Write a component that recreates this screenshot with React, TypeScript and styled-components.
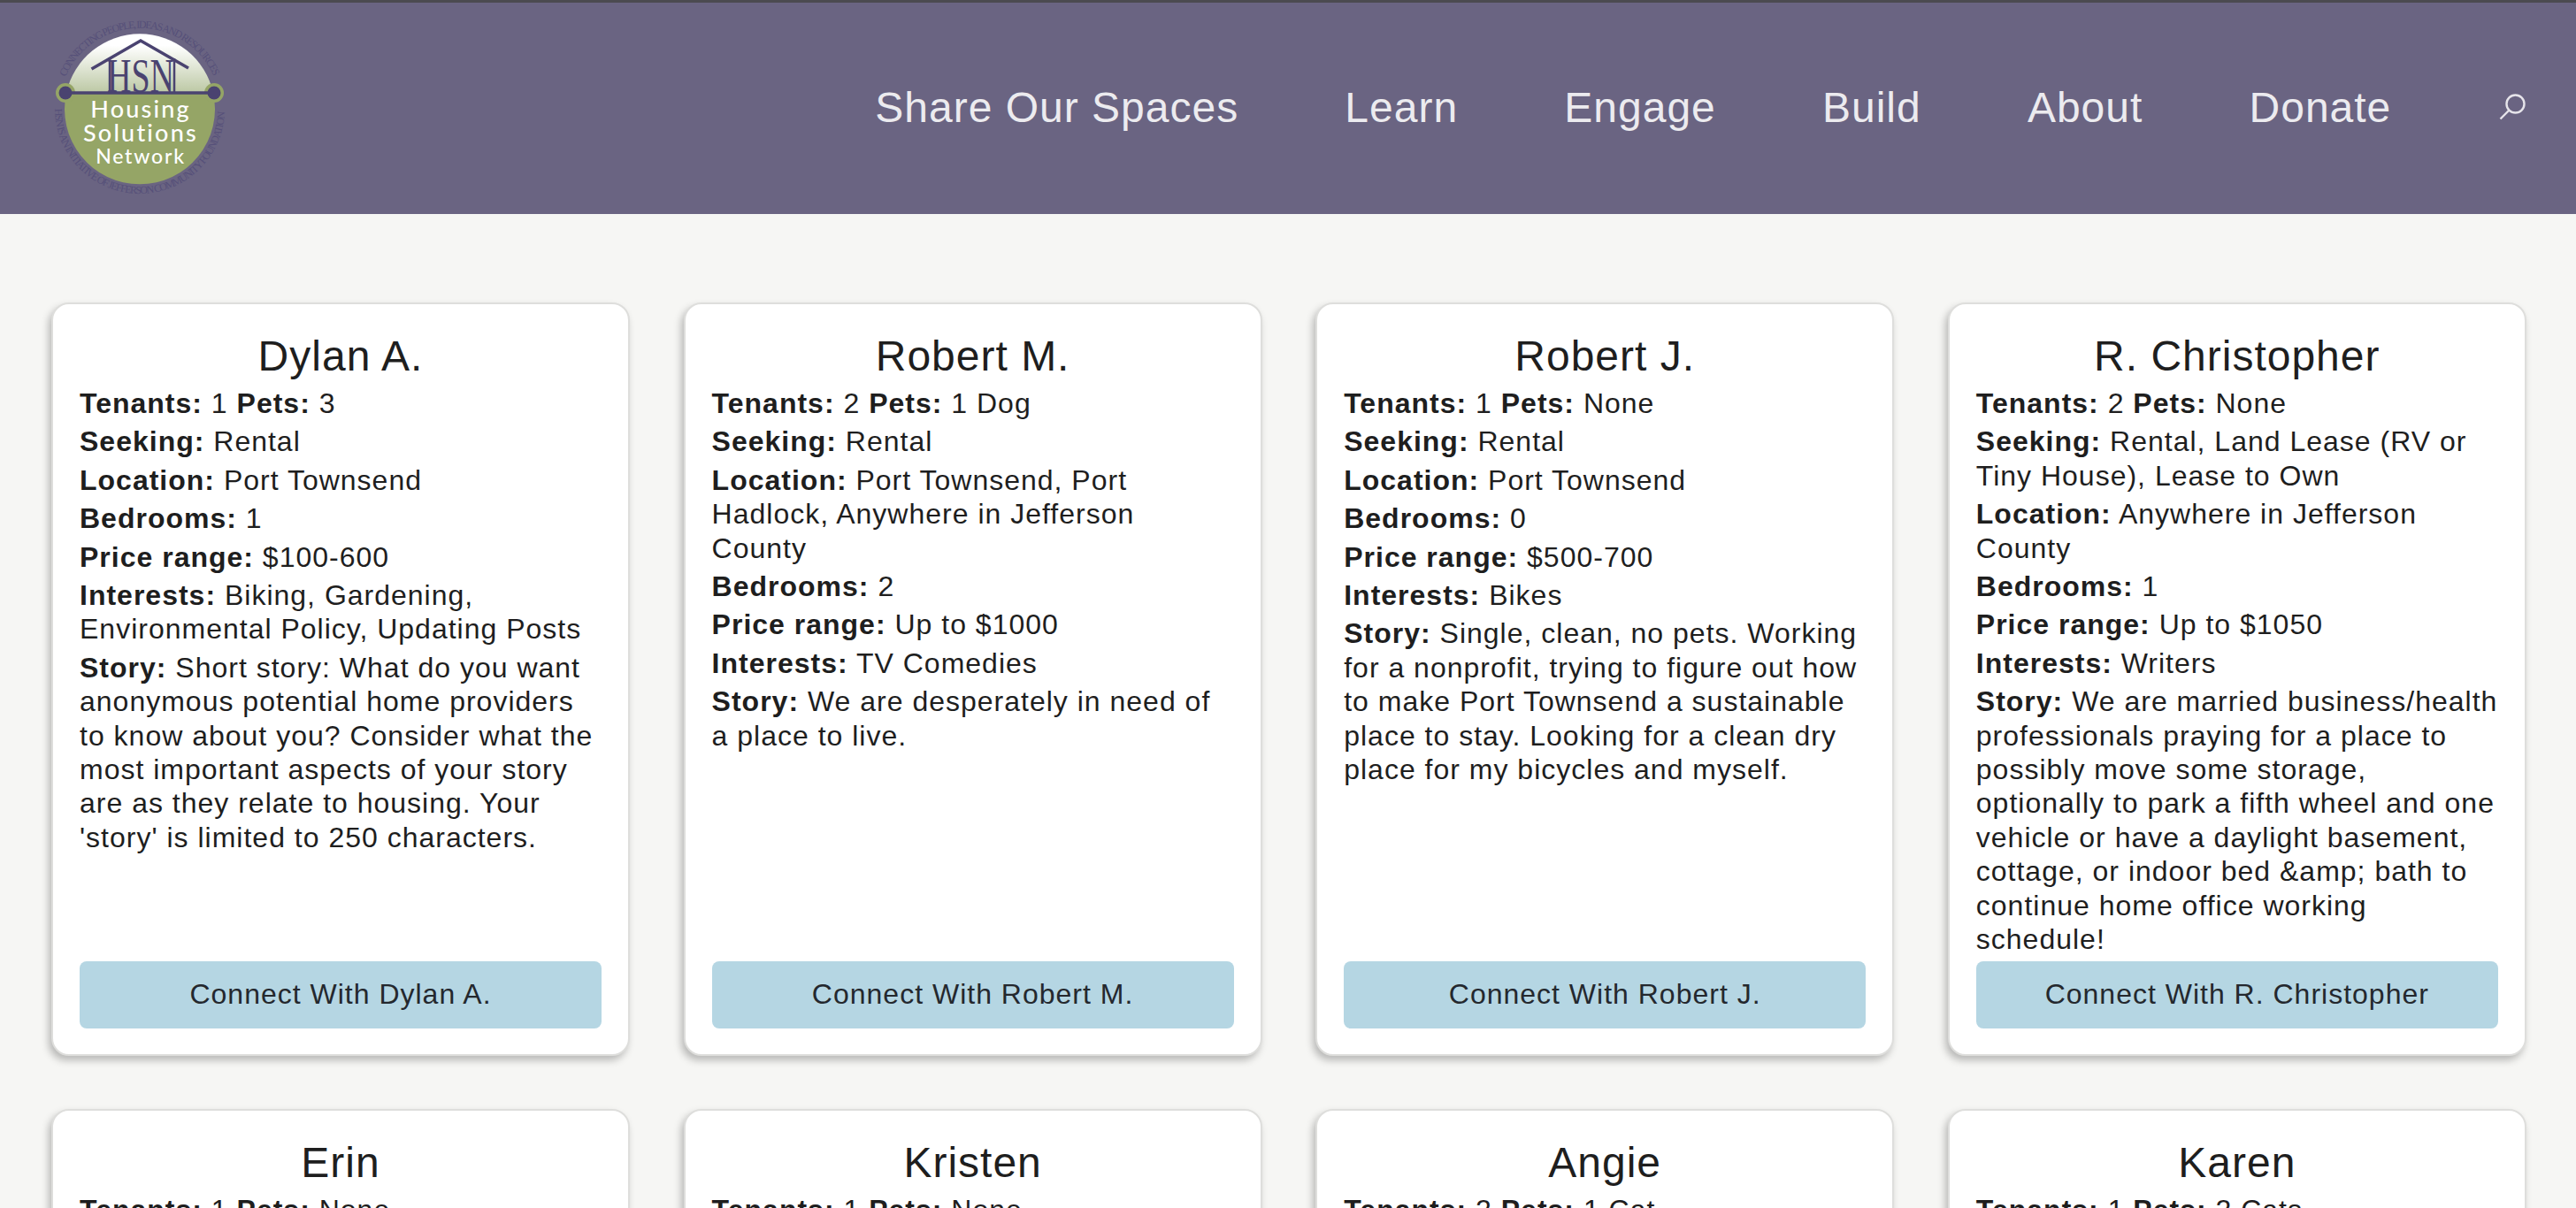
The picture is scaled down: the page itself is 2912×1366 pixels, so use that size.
import React from 'react';
import styled, { createGlobalStyle } from 'styled-components';

const Global = createGlobalStyle`
  html, body { margin: 0; padding: 0; background: #f6f6f4; height: 1366px; overflow: hidden; }
  * { box-sizing: border-box; }
  body { font-family: "Liberation Sans", Arial, sans-serif; color: #1e1e1e; }
`;

const Header = styled.header`
  height: 242px;
  border-top: 3px solid #4b4a50;
  background: #6a6482;
  display: flex;
  align-items: center;
  justify-content: space-between;
  padding: 0 57px 0 50px;
`;
const Nav = styled.nav`
  display: flex;
  align-items: center;
  gap: 120.2px;
`;
const NavLink = styled.a`
  font-size: 48px;
  line-height: 58px;
  letter-spacing: 1px;
  color: #ecebef;
  margin-top: -2px;
`;
const SearchButton = styled.span`
  display: flex;
  margin-left: 1.5px;
  margin-top: -4px;
`;
const Main = styled.main`
  display: grid;
  grid-template-columns: repeat(4, 654px);
  column-gap: 60.6px;
  row-gap: 60px;
  padding: 100px 0 0 58px;
`;
const Card = styled.article`
  display: flex;
  flex-direction: column;
  background: #fff;
  border: 2px solid #dededc;
  border-radius: 20px;
  box-shadow: -3px 5px 8px rgba(0, 0, 0, 0.25);
  padding: 30px 30px 29px;
`;
const Name = styled.h2`
  margin: 0 0 5px;
  font-size: 48px;
  line-height: 58px;
  font-weight: 400;
  letter-spacing: 1px;
  text-align: center;
  color: #1e1e1e;
`;
const Line = styled.p`
  margin: 0 0 5px;
  font-size: 32px;
  line-height: 38.4px;
  letter-spacing: 1px;
  color: #1e1e1e;
`;
const Connect = styled.a`
  margin-top: auto;
  height: 76px;
  display: flex;
  align-items: center;
  justify-content: center;
  background: #b5d6e3;
  border-radius: 8px;
  font-size: 32px;
  letter-spacing: 1px;
  color: #24282e;
`;

const Logo = () => (
  <svg width="210" height="205" viewBox="50 20 210 205" role="img" aria-label="Housing Solutions Network">
    <defs>
      <linearGradient id="dome" x1="0" y1="38" x2="0" y2="105" gradientUnits="userSpaceOnUse">
        <stop offset="0.2" stopColor="#ffffff" />
        <stop offset="1" stopColor="#bcc8a4" />
      </linearGradient>
      <path id="topArc" d="M 74 87 A 91.400 91.400 0 0 1 242 87" />
      <path id="botArc" d="M 62 123 A 96 96 0 0 0 254 123" />
    </defs>
    <text fill="#565079" fontFamily="Liberation Serif, serif" fontSize="12">
      <textPath href="#topArc" textLength="212" lengthAdjust="spacing">CONNECTING PEOPLE, IDEAS AND RESOURCES</textPath>
    </text>
    <text fill="#565079" fontFamily="Liberation Serif, serif" fontSize="12">
      <textPath href="#botArc" textLength="298" lengthAdjust="spacing">HSN IS AN INITIATIVE OF JEFFERSON COMMUNITY FOUNDATION</textPath>
    </text>
    <path d="M 75 105 A 85 85 0 0 1 241 105 Z" fill="url(#dome)" />
    <path d="M 75 105 A 85 85 0 1 0 241 105 Z" fill="#95a566" />
    <circle cx="74" cy="105" r="11" fill="#95a566" />
    <circle cx="242" cy="105" r="11" fill="#95a566" />
    <circle cx="74" cy="105" r="7.5" fill="#4a4370" />
    <circle cx="242" cy="105" r="7.5" fill="#4a4370" />
    <path d="M74 105H242" stroke="#4a4370" strokeWidth="3.5" />
    <path d="M103.500 78 L159 46 L213 77" fill="none" stroke="#4a4370" strokeWidth="3.5" />
    <path d="M124 65V105M197 66V105" fill="none" stroke="#4a4370" strokeWidth="2.5" />
    <text x="159" y="104" textAnchor="middle" fill="#4a4370" fontFamily="Liberation Serif, serif" fontSize="55" textLength="76" lengthAdjust="spacingAndGlyphs">HSN</text>
    <g fill="#ffffff" fontFamily="Lato, sans-serif" fontWeight="500" textAnchor="middle">
      <text x="159" y="132.500" fontSize="27" letterSpacing="2.2">Housing</text>
      <text x="159" y="159.500" fontSize="27" letterSpacing="2.2">Solutions</text>
      <text x="159" y="184.500" fontSize="23" letterSpacing="1.8">Network</text>
    </g>
  </svg>
);

const SearchIcon = () => (
  <svg width="30" height="30" viewBox="0 0 30 30" fill="none" stroke="#e6e4ea" strokeWidth="2.4">
    <circle cx="18.500" cy="11.500" r="10" />
    <path d="M11.500 18.500 L1.500 28.500" />
  </svg>
);

type Person = { name: string; tenants: string; pets: string; rows?: [string, string][] };

const people: Person[] = [
  { name: 'Dylan A.', tenants: '1', pets: '3', rows: [
    ['Seeking', 'Rental'], ['Location', 'Port Townsend'], ['Bedrooms', '1'], ['Price range', '$100-600'],
    ['Interests', 'Biking, Gardening, Environmental Policy, Updating Posts'],
    ['Story', "Short story: What do you want anonymous potential home providers to know about you? Consider what the most important aspects of your story are as they relate to housing. Your 'story' is limited to 250 characters."],
  ] },
  { name: 'Robert M.', tenants: '2', pets: '1 Dog', rows: [
    ['Seeking', 'Rental'], ['Location', 'Port Townsend, Port Hadlock, Anywhere in Jefferson County'], ['Bedrooms', '2'], ['Price range', 'Up to $1000'],
    ['Interests', 'TV Comedies'], ['Story', 'We are desperately in need of a place to live.'],
  ] },
  { name: 'Robert J.', tenants: '1', pets: 'None', rows: [
    ['Seeking', 'Rental'], ['Location', 'Port Townsend'], ['Bedrooms', '0'], ['Price range', '$500-700'], ['Interests', 'Bikes'],
    ['Story', 'Single, clean, no pets. Working for a nonprofit, trying to figure out how to make Port Townsend a sustainable place to stay. Looking for a clean dry place for my bicycles and myself.'],
  ] },
  { name: 'R. Christopher', tenants: '2', pets: 'None', rows: [
    ['Seeking', 'Rental, Land Lease (RV or Tiny House), Lease to Own'], ['Location', 'Anywhere in Jefferson County'], ['Bedrooms', '1'], ['Price range', 'Up to $1050'], ['Interests', 'Writers'],
    ['Story', 'We are married business/health professionals praying for a place to possibly move some storage, optionally to park a fifth wheel and one vehicle or have a daylight basement, cottage, or indoor bed &amp; bath to continue home office working schedule!'],
  ] },
  { name: 'Erin', tenants: '1', pets: 'None' },
  { name: 'Kristen', tenants: '1', pets: 'None' },
  { name: 'Angie', tenants: '2', pets: '1 Cat' },
  { name: 'Karen', tenants: '1', pets: '2 Cats' },
];

export default function App() {
  return (
    <>
      <Global />
      <Header>
        <Logo />
        <Nav>
          {['Share Our Spaces', 'Learn', 'Engage', 'Build', 'About', 'Donate'].map((n) => (
            <NavLink key={n}>{n}</NavLink>
          ))}
          <SearchButton><SearchIcon /></SearchButton>
        </Nav>
      </Header>
      <Main>
        {people.map((p) => (
          <Card key={p.name}>
            <Name>{p.name}</Name>
            <Line><b>Tenants:</b> {p.tenants} <b>Pets:</b> {p.pets}</Line>
            {p.rows?.map(([k, v]) => (
              <Line key={k}><b>{k}:</b> {v}</Line>
            ))}
            {p.rows && <Connect>Connect With {p.name}</Connect>}
          </Card>
        ))}
      </Main>
    </>
  );
}
